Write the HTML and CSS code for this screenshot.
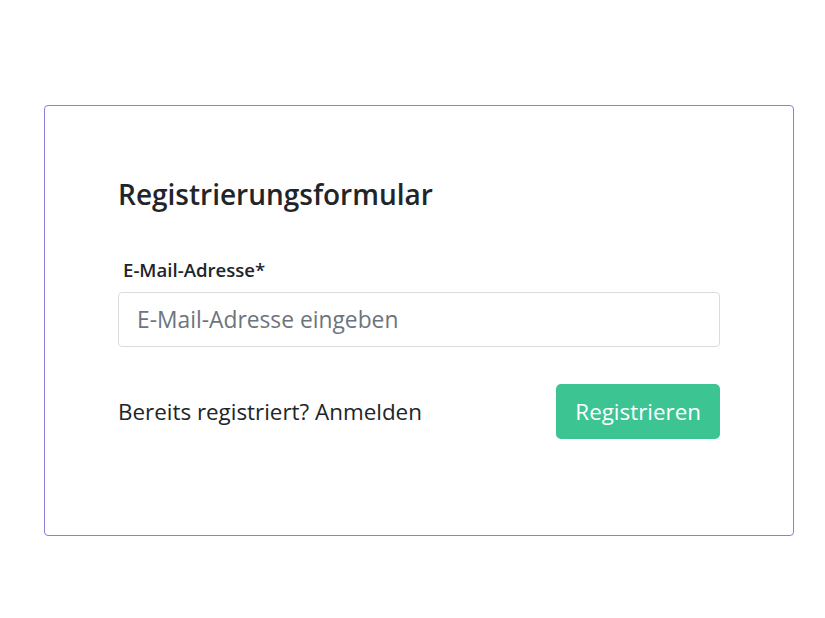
FILE: index.html
```html
<!DOCTYPE html>
<html lang="de">
<head>
    <meta charset="UTF-8">
    <meta name="viewport" content="width=device-width, initial-scale=1.0">
    <link rel="stylesheet" href="styles.css">
    <title>Registrierungsformular</title>
</head>
<body>
    <main class="register-card">
        <h1 class="register-title">Registrierungsformular</h1>
        <form class="register-form">
            <label for="email" class="field-label">E-Mail-Adresse*</label>
            <input type="email" id="email" name="email" class="field-input" placeholder="E-Mail-Adresse eingeben">
            <div class="form-footer">
                <p class="login-hint">Bereits registriert? Anmelden</p>
                <button type="button" class="submit-btn">Registrieren</button>
            </div>
        </form>
    </main>
</body>
</html>
```

FILE: styles.css
```css
body {
    font-family: 'Open Sans', 'Noto Sans', sans-serif;
    color: #212529;
    background-color: #fff;
    margin: 0;
    padding: 105px 0 0 44px;
}

.register-card {
    box-sizing: border-box;
    width: 750px;
    height: 431px;
    border: 1px solid #8b80d8;
    border-radius: 4px;
    padding: 72px 73px 0 73px;
}

.register-title {
    font-size: 28px;
    font-weight: 600;
    line-height: 1.2;
    margin: 0 0 45px 0;
}

.register-form {
    display: flex;
    flex-direction: column;
}

.field-label {
    font-size: 18.6px;
    font-weight: 600;
    margin: 0 0 10px 5px;
}

.field-input {
    box-sizing: border-box;
    height: 55px;
    width: 100%;
    padding: 0 18px;
    border: 1px solid #d9dde1;
    border-radius: 4px;
    font-family: inherit;
    font-size: 22.8px;
    color: #212529;
}

.field-input::placeholder {
    color: #6c757d;
}

.form-footer {
    display: flex;
    justify-content: space-between;
    align-items: center;
    margin-top: 37px;
}

.login-hint {
    margin: 0;
    font-size: 22.4px;
}

.submit-btn {
    height: 55px;
    padding: 0 19px;
    border: none;
    border-radius: 5px;
    background-color: #3cc493;
    color: #fff;
    font-family: inherit;
    font-size: 22.4px;
    cursor: pointer;
}
```
